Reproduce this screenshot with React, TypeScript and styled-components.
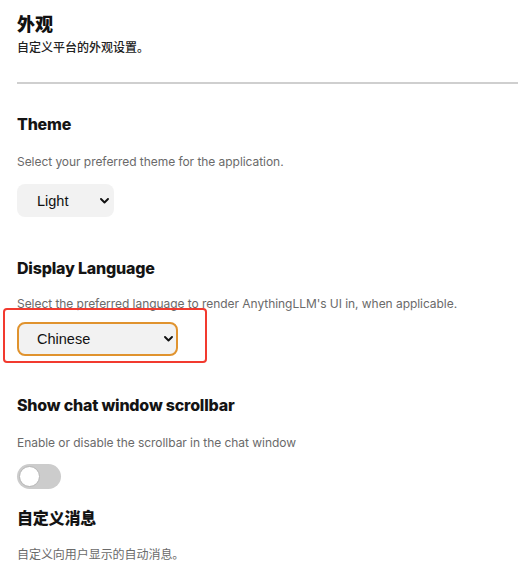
import styled, { createGlobalStyle } from "styled-components"

const GlobalStyle = createGlobalStyle`
  html, body {
    margin: 0;
    padding: 0;
    background: #ffffff;
  }
  body {
    font-family: Inter, "Noto Sans CJK SC", sans-serif;
    color: #151515;
  }
`

const Chevron = () => (
  <svg width="9" height="6" viewBox="0 0 9 6" fill="none">
    <path d="M1 1 L4.5 4.5 L8 1" stroke="#111" strokeWidth="1.9" strokeLinecap="round" strokeLinejoin="round" />
  </svg>
)

type PickerProps = { value: string; width: number; focused?: boolean }

const Picker = ({ value, width, focused }: PickerProps) => (
  <PickerHold>
    <SelectBox $width={width} $focused={focused} value={value} onChange={() => {}}>
      <option>{value}</option>
    </SelectBox>
    <ChevronSpot>
      <Chevron />
    </ChevronSpot>
    {focused && <Highlight />}
  </PickerHold>
)

const App = () => {
  return (
    <Page>
      <GlobalStyle />
      <Header>
        <PageTitle>外观</PageTitle>
        <PageSub>自定义平台的外观设置。</PageSub>
      </Header>
      <Divider />

      <Section $top={29}>
        <Heading>Theme</Heading>
        <Desc $top={19} $bottom={14}>Select your preferred theme for the application.</Desc>
        <Picker value="Light" width={97} />
      </Section>

      <Section $top={40}>
        <Heading>Display Language</Heading>
        <Desc $top={17} $bottom={10}>
          Select the preferred language to render AnythingLLM's UI in, when applicable.
        </Desc>
        <Picker value="Chinese" width={161} focused />
      </Section>

      <Section $top={38}>
        <Heading>Show chat window scrollbar</Heading>
        <Desc $top={19} $bottom={13}>Enable or disable the scrollbar in the chat window</Desc>
        <Toggle>
          <Knob />
        </Toggle>
      </Section>

      <Section $top={18}>
        <Heading>自定义消息</Heading>
        <Desc $top={18} $bottom={0}>自定义向用户显示的自动消息。</Desc>
      </Section>
    </Page>
  )
}

export default App

const Page = styled.div`
  padding: 11px 0 0 17px;
  overflow: hidden;
`

const Header = styled.div`
  display: flex;
  flex-direction: column;
  gap: 4px;
`

const PageTitle = styled.h1`
  margin: 0;
  font-family: "Noto Sans CJK SC", sans-serif;
  font-size: 18px;
  line-height: 24px;
  font-weight: 900;
  color: #111;
`

const PageSub = styled.div`
  font-family: "Noto Sans CJK SC", sans-serif;
  font-size: 12px;
  line-height: 16px;
  font-weight: 500;
  color: #222;
`

const Divider = styled.div`
  margin-top: 27px;
  height: 2px;
  background-color: #cfcfcf;
`

const Section = styled.div<{ $top: number }>`
  display: flex;
  flex-direction: column;
  align-items: flex-start;
  margin-top: ${(p) => p.$top}px;
`

const Heading = styled.h2`
  margin: 0;
  font-family: Inter, "Noto Sans CJK SC", sans-serif;
  font-size: 16px;
  line-height: 22px;
  font-weight: 800;
  letter-spacing: -0.2px;
  color: #141414;
`

const Desc = styled.p<{ $top: number; $bottom: number }>`
  margin: ${(p) => p.$top}px 0 ${(p) => p.$bottom}px;
  font-family: Inter, "Noto Sans CJK SC", sans-serif;
  font-size: 12px;
  line-height: 16px;
  letter-spacing: -0.05px;
  color: #6a6a6a;
`

const PickerHold = styled.div`
  position: relative;
  display: inline-flex;
`

const SelectBox = styled.select<{ $width: number; $focused?: boolean }>`
  appearance: none;
  -webkit-appearance: none;
  width: ${(p) => p.$width}px;
  height: ${(p) => (p.$focused ? 34 : 33)}px;
  padding: 0 0 0 ${(p) => (p.$focused ? 18 : 20)}px;
  border: ${(p) => (p.$focused ? "2px solid #e0932e" : "none")};
  border-radius: 8px;
  background-color: #f2f2f2;
  font-family: "Liberation Sans", Arial, sans-serif;
  font-size: 14.5px;
  color: #111;
  outline: none;
`

const ChevronSpot = styled.span`
  position: absolute;
  right: 5px;
  top: 50%;
  transform: translateY(-50%);
  display: flex;
  pointer-events: none;
`

const Highlight = styled.span`
  position: absolute;
  left: -14px;
  top: -14px;
  width: 204px;
  height: 55px;
  box-sizing: border-box;
  border: 2.5px solid #f23a2f;
  border-radius: 4px;
  pointer-events: none;
`

const Toggle = styled.div`
  width: 44px;
  height: 25px;
  border-radius: 13px;
  background-color: #cccccc;
  display: flex;
  align-items: center;
  padding-left: 2px;
  box-sizing: border-box;
`

const Knob = styled.div`
  width: 21px;
  height: 21px;
  border-radius: 50%;
  background-color: #ffffff;
  border: 1px solid #b5b5b5;
  box-sizing: border-box;
`
